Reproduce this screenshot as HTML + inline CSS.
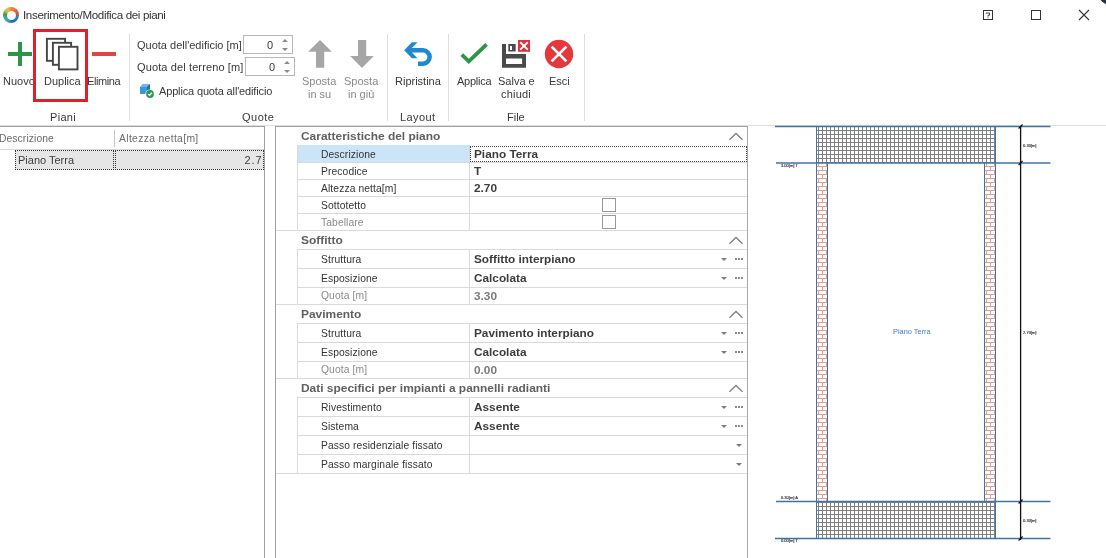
<!DOCTYPE html>
<html><head><meta charset="utf-8">
<style>
*{margin:0;padding:0;box-sizing:border-box}
html,body{width:1106px;height:558px;overflow:hidden;background:#fff}
body{position:relative;font-family:"Liberation Sans",sans-serif;color:#3b3b3b}
.a{position:absolute;white-space:nowrap}
.t{font-size:11px;line-height:12px}
.rb{font-size:11px;line-height:13px;color:#383838;margin-top:1px}
.dis{color:#8c8c8c}
.hl{position:absolute;height:1px;background:#dcdcdc}
.vl{position:absolute;width:1px;background:#dcdcdc}
.sec{font-size:11px;font-weight:bold;color:#606060;transform:scaleX(1.085);transform-origin:0 0}
.lab{font-size:10.3px;color:#333;letter-spacing:0.1px}
.val{font-size:11.8px;font-weight:bold;color:#3c3c3c}
.dd{position:absolute;width:0;height:0;border-left:3px solid transparent;border-right:3px solid transparent;border-top:3px solid #7c7c7c}
.el{position:absolute;width:8px;height:2px;background:
 linear-gradient(90deg,#8a8a8a 0 2px,transparent 2px 3px,#8a8a8a 3px 5px,transparent 5px 6px,#8a8a8a 6px 8px)}
.chev{position:absolute;width:15px;height:8px}
.vdis{color:#7a7a7a}
.lab.dis{color:#8a8a8a}
</style></head><body>
<div id="wrap" style="position:absolute;left:0;top:0;width:1106px;height:558px;will-change:transform">

<!-- Title bar -->
<div class="a" style="left:3px;top:7px;width:16px;height:16px;border-radius:50%;background:conic-gradient(from 0deg,#ec8a40,#e8603a 50deg,#d84a3a 85deg,#2f86b8 100deg,#1e6aa8 160deg,#3aa8c8 215deg,#40a8a0 245deg,#3a9a48 275deg,#b8cc40 310deg,#f0b840 335deg,#ec8a40)"></div>
<div class="a" style="left:6.5px;top:10.5px;width:9px;height:9px;border-radius:50%;background:#fff"></div>
<div class="a" style="left:23px;top:8px;font-size:11.6px;letter-spacing:-0.36px;color:#333">Inserimento/Modifica dei piani</div>

<!-- window buttons -->
<div class="a" style="left:983px;top:10px;width:10px;height:10px;border:1px solid #333"></div>
<svg class="a" style="left:983px;top:10px" width="10" height="10" viewBox="0 0 10 10"><path d="M3.2 3.6V3H6.6V5.2H5V6.6" fill="none" stroke="#333" stroke-width="0.9"/><rect x="4.55" y="7.3" width="0.9" height="0.9" fill="#333"/></svg>
<div class="a" style="left:1031px;top:10px;width:10px;height:10px;border:1px solid #333"></div>
<svg class="a" style="left:1078px;top:9px" width="12" height="12" viewBox="0 0 12 12"><path d="M1 1L11 11M11 1L1 11" stroke="#333" stroke-width="1.1"/></svg>
<div class="a" style="left:1097.5px;top:-20.5px;width:25px;height:25px;border-radius:50%;background:#27323e;filter:blur(0.5px)"></div>

<!-- Ribbon -->
<div id="ribbon">
<!-- Nuovo -->
<div class="a" style="left:8px;top:52px;width:24px;height:4px;background:#2e9447"></div>
<div class="a" style="left:18px;top:42px;width:4px;height:24px;background:#2e9447"></div>
<div class="a rb" style="left:3px;top:74px">Nuovo</div>
<!-- Duplica -->
<svg class="a" style="left:44px;top:36px" width="36" height="36" viewBox="0 0 36 36">
<rect x="2.9" y="2.8" width="18.2" height="22" fill="#fff" stroke="#454545" stroke-width="1.9"/>
<rect x="8.9" y="6.8" width="18.2" height="22" fill="#fff" stroke="#454545" stroke-width="1.9"/>
<rect x="14.9" y="10.8" width="18.6" height="22.6" fill="#fff" stroke="#454545" stroke-width="1.9"/>
</svg>
<div class="a rb" style="left:44px;top:74px">Duplica</div>
<div class="a" style="left:33px;top:29px;width:55px;height:73px;border:3px solid #df1f2b"></div>
<!-- Elimina -->
<div class="a" style="left:92px;top:52px;width:24px;height:4px;background:#e04545"></div>
<div class="a rb" style="left:87px;top:74px;letter-spacing:-0.4px">Elimina</div>
<div class="a rb" style="left:50px;top:110px;letter-spacing:0.3px">Piani</div>
<div class="a" style="left:129px;top:34px;width:1px;height:87px;background:#dedede"></div>

<!-- Quote -->
<div class="a rb" style="left:137px;top:38px;letter-spacing:0px">Quota dell'edificio [m]</div>
<div class="a" style="left:243px;top:35px;width:50px;height:19px;border:1px solid #b8b8b8;background:#fff"></div>
<div class="a rb" style="left:267px;top:38px">0</div>
<svg class="a" style="left:282px;top:37px" width="8" height="16" viewBox="0 0 8 16"><path d="M0 5H6L3 2Z M0 11H6L3 14Z" fill="#8a8a8a"/></svg>
<div class="a rb" style="left:137px;top:60px;letter-spacing:0.12px">Quota del terreno [m]</div>
<div class="a" style="left:245px;top:57px;width:50px;height:19px;border:1px solid #b8b8b8;background:#fff"></div>
<div class="a rb" style="left:269px;top:60px">0</div>
<svg class="a" style="left:284px;top:59px" width="8" height="16" viewBox="0 0 8 16"><path d="M0 5H6L3 2Z M0 11H6L3 14Z" fill="#8a8a8a"/></svg>
<svg class="a" style="left:138px;top:82px" width="18" height="18" viewBox="0 0 18 18">
<path d="M2 5L4.5 2H12V10L9 12V5Z" fill="#6cb6ea"/>
<path d="M9 5L12 2V10L9 12Z" fill="#1f6fb5"/>
<rect x="2" y="5" width="7" height="7" fill="#3d97d9"/>
<circle cx="12" cy="12" r="4.6" fill="#fff"/>
<circle cx="12" cy="12" r="3.9" fill="#2a9a4a"/>
<path d="M10.2 12L11.5 13.3L14 10.8" fill="none" stroke="#fff" stroke-width="1.3"/>
</svg>
<div class="a rb" style="left:159px;top:84px;letter-spacing:-0.15px">Applica quota all'edificio</div>
<div class="a rb" style="left:242px;top:110px;letter-spacing:0.5px">Quote</div>

<!-- Sposta -->
<svg class="a" style="left:306px;top:38px" width="28" height="32" viewBox="0 0 28 32"><path d="M14 2L25.8 13.8H18.2V29.8H10V13.8H2.2Z" fill="#a6a6a6"/></svg>
<div class="a rb dis" style="left:302px;top:74px;color:#8a8a8a">Sposta</div>
<div class="a rb dis" style="left:308px;top:87px;color:#8a8a8a">in su</div>
<svg class="a" style="left:348px;top:38px" width="28" height="32" viewBox="0 0 28 32"><path d="M14 29.9L25.8 18H18.2V2H10V18H2.2Z" fill="#a6a6a6"/></svg>
<div class="a rb dis" style="left:344px;top:74px;color:#8a8a8a">Sposta</div>
<div class="a rb dis" style="left:348px;top:87px;color:#8a8a8a">in giù</div>
<div class="a" style="left:387px;top:34px;width:1px;height:87px;background:#dedede"></div>

<!-- Ripristina -->
<svg class="a" style="left:400px;top:36px" width="40" height="36" viewBox="0 0 40 36">
<path d="M4.15 14.2L11.9 6.2H17.5L11.9 12.1H23A8.9 8.9 0 0 1 23 29.9H18V25.4H23A4.4 4.4 0 0 0 23 16.6H11.9L17.5 22.2H11.9Z" fill="#1e88d0"/>
</svg>
<div class="a rb" style="left:395px;top:74px">Ripristina</div>
<div class="a rb" style="left:400px;top:110px;letter-spacing:0.4px">Layout</div>
<div class="a" style="left:448px;top:34px;width:1px;height:87px;background:#dedede"></div>

<!-- Applica -->
<svg class="a" style="left:456px;top:38px" width="36" height="30" viewBox="0 0 36 30"><path d="M5.8 16.6L12.8 23.3L30.6 6.3" fill="none" stroke="#2e9447" stroke-width="3.8"/></svg>
<div class="a rb" style="left:457px;top:74px;letter-spacing:-0.25px">Applica</div>
<!-- Salva e chiudi -->
<svg class="a" style="left:496px;top:36px" width="40" height="36" viewBox="0 0 40 36">
<path d="M6 8H10V18H30V31.7H6Z M10 22.4V28.1H26.1V22.4Z" fill="#4a4a4a" fill-rule="evenodd"/>
<path d="M12.3 8H19.7V15.5H12.3Z M14 10V13.9H16V10Z" fill="#4a4a4a" fill-rule="evenodd"/>
<rect x="22" y="4" width="12" height="11.8" fill="#e0303a"/>
<path d="M24.2 6.2L31.8 13.6M31.8 6.2L24.2 13.6" stroke="#fff" stroke-width="1.9"/>
</svg>
<div class="a rb" style="left:498px;top:74px">Salva e</div>
<div class="a rb" style="left:501px;top:87px;letter-spacing:0.2px">chiudi</div>
<!-- Esci -->
<svg class="a" style="left:544px;top:39px" width="30" height="30" viewBox="0 0 30 30">
<circle cx="15" cy="15" r="14.2" fill="#e5383c"/>
<path d="M7.6 7.6L22.4 22.4M22.4 7.6L7.6 22.4" stroke="#fff" stroke-width="2.7"/>
</svg>
<div class="a rb" style="left:549px;top:74px">Esci</div>
<div class="a rb" style="left:507px;top:110px">File</div>
<div class="a" style="left:584px;top:34px;width:1px;height:87px;background:#dedede"></div>
</div>

<!-- Ribbon bottom line -->
<div class="a" style="left:0;top:125px;width:1106px;height:1px;background:#dedede"></div>
<div class="a" style="left:0;top:126px;width:265px;height:1px;background:#a0a0a0"></div>
<div class="a" style="left:275px;top:126px;width:473px;height:1px;background:#a0a0a0"></div>

<!-- Left grid -->
<div id="leftgrid">
<div class="a" style="left:-1px;top:133px;font-size:10.3px;color:#6a6a6a;letter-spacing:0.1px">Descrizione</div>
<div class="a" style="left:114px;top:130px;width:1px;height:17px;background:#c8c8c8"></div>
<div class="a" style="left:119px;top:133px;font-size:10.3px;color:#6a6a6a;letter-spacing:0.36px">Altezza netta[m]</div>
<div class="a" style="left:0;top:149px;width:264px;height:1px;background:#d8d8d8"></div>
<div class="a" style="left:15px;top:150px;width:249px;height:20px;background:#e6e6e6"></div>
<div class="a" style="left:15px;top:150px;width:99px;height:20px;border:1px dotted #333"></div>
<div class="a" style="left:115px;top:150px;width:149px;height:20px;border:1px dotted #333"></div>
<div class="a" style="left:18px;top:154px;font-size:11px;color:#3c3c3c">Piano Terra</div>
<div class="a" style="left:244.5px;top:154px;font-size:11px;color:#3c3c3c;letter-spacing:0.9px">2.7</div>
<div class="a" style="left:264px;top:127px;width:1px;height:431px;background:#a0a0a0"></div>
<div class="a" style="left:275px;top:127px;width:1px;height:431px;background:#a0a0a0"></div>
</div>

<!-- Property grid -->
<div id="pgrid">
<div class="a sec" style="left:301px;top:130px;">Caratteristiche del piano</div>
<svg class="a" style="left:728px;top:132px" width="16" height="9" viewBox="0 0 16 9"><path d="M1.5 7.8L8 1.5L14.5 7.8" fill="none" stroke="#808080" stroke-width="1.3"/></svg>
<div class="a" style="left:298px;top:145px;width:171px;height:17px;background:#cce4f7"></div>
<div class="a" style="left:470px;top:146px;width:277px;height:16px;border:1px dotted #444"></div>
<div class="a lab" style="left:321px;top:149px;">Descrizione</div>
<div class="a val" style="left:474px;top:147px;">Piano Terra</div>
<div class="a" style="left:297px;top:162px;width:450px;height:1px;background:#dadada"></div>
<div class="a lab" style="left:321px;top:166px;">Precodice</div>
<div class="a val" style="left:474px;top:164px;">T</div>
<div class="a" style="left:297px;top:179px;width:450px;height:1px;background:#dadada"></div>
<div class="a lab" style="left:321px;top:183px;">Altezza netta[m]</div>
<div class="a val" style="left:474px;top:181px;">2.70</div>
<div class="a" style="left:297px;top:196px;width:450px;height:1px;background:#dadada"></div>
<div class="a lab" style="left:321px;top:200px;">Sottotetto</div>
<div class="a" style="left:602px;top:198px;width:14px;height:14px;border:1px solid #979797;background:#fff"></div>
<div class="a" style="left:297px;top:213px;width:450px;height:1px;background:#dadada"></div>
<div class="a lab dis" style="left:321px;top:217px;">Tabellare</div>
<div class="a" style="left:602px;top:215px;width:14px;height:14px;border:1px solid #979797;background:#fff"></div>
<div class="a" style="left:297px;top:145px;width:1px;height:85px;background:#dadada"></div>
<div class="a" style="left:469px;top:145px;width:1px;height:85px;background:#dadada"></div>
<div class="a" style="left:276px;top:230px;width:471px;height:1px;background:#dadada"></div>
<div class="a sec" style="left:301px;top:234px;">Soffitto</div>
<svg class="a" style="left:728px;top:236px" width="16" height="9" viewBox="0 0 16 9"><path d="M1.5 7.8L8 1.5L14.5 7.8" fill="none" stroke="#808080" stroke-width="1.3"/></svg>
<div class="a" style="left:297px;top:249px;width:450px;height:1px;background:#dadada"></div>
<div class="a lab" style="left:321px;top:254px;">Struttura</div>
<div class="a val" style="left:474px;top:252px;">Soffitto interpiano</div>
<div class="dd" style="left:721px;top:258px"></div>
<div class="el" style="left:735px;top:258px"></div>
<div class="a" style="left:297px;top:268px;width:450px;height:1px;background:#dadada"></div>
<div class="a lab" style="left:321px;top:273px;">Esposizione</div>
<div class="a val" style="left:474px;top:271px;">Calcolata</div>
<div class="dd" style="left:721px;top:277px"></div>
<div class="el" style="left:735px;top:277px"></div>
<div class="a" style="left:297px;top:287px;width:450px;height:1px;background:#dadada"></div>
<div class="a lab dis" style="left:321px;top:290px;">Quota [m]</div>
<div class="a val vdis" style="left:474px;top:289px;">3.30</div>
<div class="a" style="left:297px;top:249px;width:1px;height:55px;background:#dadada"></div>
<div class="a" style="left:469px;top:249px;width:1px;height:55px;background:#dadada"></div>
<div class="a" style="left:276px;top:304px;width:471px;height:1px;background:#dadada"></div>
<div class="a sec" style="left:301px;top:308px;">Pavimento</div>
<svg class="a" style="left:728px;top:310px" width="16" height="9" viewBox="0 0 16 9"><path d="M1.5 7.8L8 1.5L14.5 7.8" fill="none" stroke="#808080" stroke-width="1.3"/></svg>
<div class="a" style="left:297px;top:323px;width:450px;height:1px;background:#dadada"></div>
<div class="a lab" style="left:321px;top:328px;">Struttura</div>
<div class="a val" style="left:474px;top:326px;">Pavimento interpiano</div>
<div class="dd" style="left:721px;top:332px"></div>
<div class="el" style="left:735px;top:332px"></div>
<div class="a" style="left:297px;top:342px;width:450px;height:1px;background:#dadada"></div>
<div class="a lab" style="left:321px;top:347px;">Esposizione</div>
<div class="a val" style="left:474px;top:345px;">Calcolata</div>
<div class="dd" style="left:721px;top:351px"></div>
<div class="el" style="left:735px;top:351px"></div>
<div class="a" style="left:297px;top:361px;width:450px;height:1px;background:#dadada"></div>
<div class="a lab dis" style="left:321px;top:364px;">Quota [m]</div>
<div class="a val vdis" style="left:474px;top:363px;">0.00</div>
<div class="a" style="left:297px;top:323px;width:1px;height:55px;background:#dadada"></div>
<div class="a" style="left:469px;top:323px;width:1px;height:55px;background:#dadada"></div>
<div class="a" style="left:276px;top:378px;width:471px;height:1px;background:#dadada"></div>
<div class="a sec" style="left:301px;top:382px;">Dati specifici per impianti a pannelli radianti</div>
<svg class="a" style="left:728px;top:384px" width="16" height="9" viewBox="0 0 16 9"><path d="M1.5 7.8L8 1.5L14.5 7.8" fill="none" stroke="#808080" stroke-width="1.3"/></svg>
<div class="a" style="left:297px;top:397px;width:450px;height:1px;background:#dadada"></div>
<div class="a lab" style="left:321px;top:402px;">Rivestimento</div>
<div class="a val" style="left:474px;top:400px;">Assente</div>
<div class="dd" style="left:721px;top:406px"></div>
<div class="el" style="left:735px;top:406px"></div>
<div class="a" style="left:297px;top:416px;width:450px;height:1px;background:#dadada"></div>
<div class="a lab" style="left:321px;top:421px;">Sistema</div>
<div class="a val" style="left:474px;top:419px;">Assente</div>
<div class="dd" style="left:721px;top:425px"></div>
<div class="el" style="left:735px;top:425px"></div>
<div class="a" style="left:297px;top:435px;width:450px;height:1px;background:#dadada"></div>
<div class="a lab" style="left:321px;top:440px;">Passo residenziale fissato</div>
<div class="dd" style="left:736px;top:444px"></div>
<div class="a" style="left:297px;top:454px;width:450px;height:1px;background:#dadada"></div>
<div class="a lab" style="left:321px;top:459px;">Passo marginale fissato</div>
<div class="dd" style="left:736px;top:463px"></div>
<div class="a" style="left:297px;top:397px;width:1px;height:76px;background:#dadada"></div>
<div class="a" style="left:469px;top:397px;width:1px;height:76px;background:#dadada"></div>
<div class="a" style="left:276px;top:473px;width:471px;height:1px;background:#dadada"></div>
<div class="a" style="left:747px;top:127px;width:1px;height:431px;background:#a8a8a8"></div>

</div><!--/pgrid-->

<!-- Drawing -->
<div id="drawing">
<svg class="a" style="left:760px;top:120px" width="346" height="438" viewBox="760 120 346 438" shape-rendering="crispEdges">
<defs>
<pattern id="grd" patternUnits="userSpaceOnUse" x="0" y="0" width="4" height="4"><rect x="2" y="0" width="1" height="4" fill="#808080"/><rect x="0" y="2" width="4" height="1" fill="#808080"/></pattern>
<pattern id="brk" patternUnits="userSpaceOnUse" x="0" y="0" width="8" height="8"><rect x="0" y="2" width="8" height="1" fill="#e89c8c"/><rect x="0" y="6" width="8" height="1" fill="#e89c8c"/><rect x="2" y="3" width="1" height="3" fill="#e89c8c"/><rect x="6" y="7" width="1" height="1" fill="#e89c8c"/><rect x="6" y="0" width="1" height="2" fill="#e89c8c"/></pattern>
</defs>
<rect x="817" y="127" width="178" height="36" fill="url(#grd)"/>
<rect x="817" y="502" width="178" height="36" fill="url(#grd)"/>
<rect x="817" y="163" width="10" height="338" fill="url(#brk)"/>
<rect x="985" y="163" width="10" height="338" fill="url(#brk)"/>
<rect x="816" y="126" width="1" height="413" fill="#3d74a8"/>
<rect x="827" y="163" width="1" height="339" fill="#3d74a8"/>
<rect x="984" y="163" width="1" height="339" fill="#3d74a8"/>
<rect x="995" y="126" width="1" height="413" fill="#3d74a8"/>
</svg>
<svg class="a" style="left:760px;top:120px" width="346" height="438" viewBox="760 120 346 438">
<line x1="775" y1="126.5" x2="1050.5" y2="126.5" stroke="#3d74a8" stroke-width="1.5"/>
<line x1="776" y1="163" x2="1050.5" y2="163" stroke="#3d74a8" stroke-width="1.5"/>
<line x1="776" y1="501.5" x2="1050.5" y2="501.5" stroke="#3d74a8" stroke-width="1.5"/>
<line x1="775" y1="538.5" x2="1050.5" y2="538.5" stroke="#3d74a8" stroke-width="1.5"/>
<line x1="1020.6" y1="126" x2="1020.6" y2="540" stroke="#111" stroke-width="1.3"/>
<line x1="1018.6" y1="128.5" x2="1022.6" y2="124.5" stroke="#111" stroke-width="1.1"/>
<line x1="1018.6" y1="165" x2="1022.6" y2="161" stroke="#111" stroke-width="1.1"/>
<line x1="1018.6" y1="503.5" x2="1022.6" y2="499.5" stroke="#111" stroke-width="1.1"/>
<line x1="1018.6" y1="540.5" x2="1022.6" y2="536.5" stroke="#111" stroke-width="1.1"/>
<text x="1023" y="146.6" font-family="Liberation Sans" font-size="4.1" fill="#333" stroke="#333" stroke-width="0.15" textLength="13.5" lengthAdjust="spacingAndGlyphs">0.30[m]</text>
<text x="1023" y="334.2" font-family="Liberation Sans" font-size="4.1" fill="#333" stroke="#333" stroke-width="0.15" textLength="13.5" lengthAdjust="spacingAndGlyphs">2.70[m]</text>
<text x="1023" y="521.8" font-family="Liberation Sans" font-size="4.1" fill="#333" stroke="#333" stroke-width="0.15" textLength="13.5" lengthAdjust="spacingAndGlyphs">0.30[m]</text>
<text x="781" y="167.2" font-family="Liberation Sans" font-size="4.1" fill="#333" stroke="#333" stroke-width="0.15" textLength="17" lengthAdjust="spacingAndGlyphs">3.00[m] T</text>
<text x="781" y="499.2" font-family="Liberation Sans" font-size="4.1" fill="#333" stroke="#333" stroke-width="0.15" textLength="17" lengthAdjust="spacingAndGlyphs">0.30[m] A</text>
<text x="781" y="542.2" font-family="Liberation Sans" font-size="4.1" fill="#333" stroke="#333" stroke-width="0.15" textLength="17" lengthAdjust="spacingAndGlyphs">0.00[m] T</text>
<text x="893" y="334" font-family="Liberation Sans" font-size="7.4" fill="#3d82c4">Piano Terra</text>
</svg>

</div><!--/drawing-->

</div>
</body></html>
